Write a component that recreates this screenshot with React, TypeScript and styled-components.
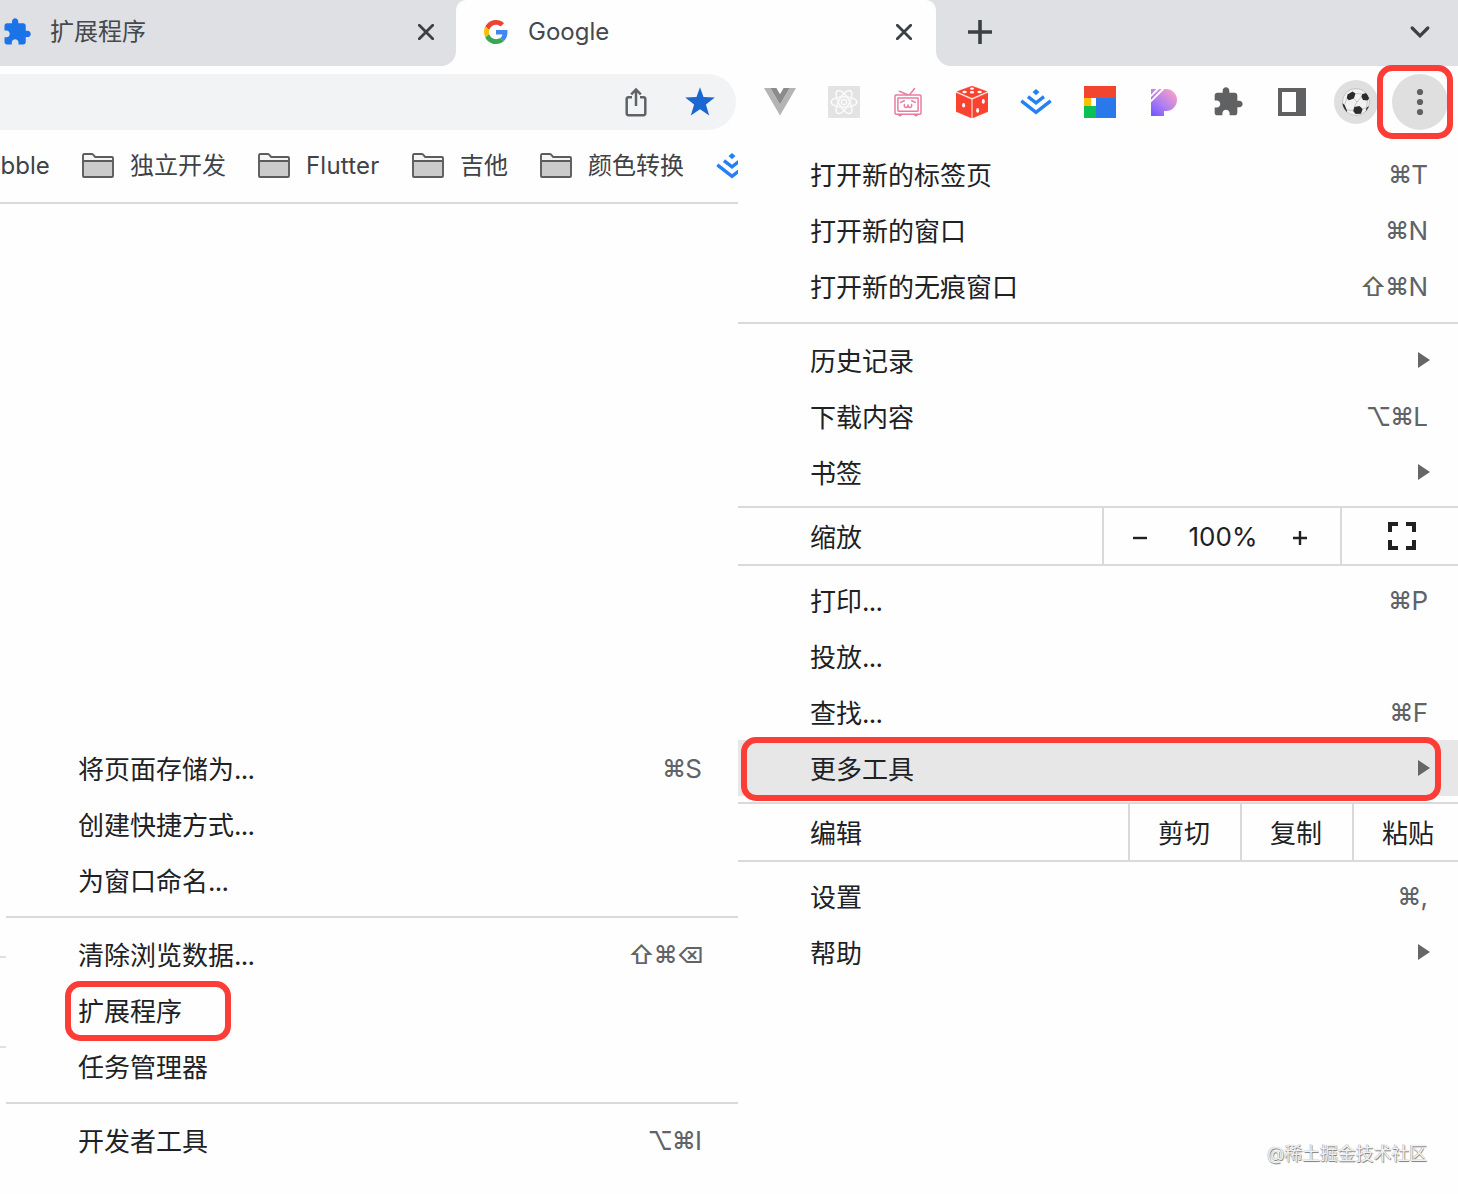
import React from "react";
import styled, { createGlobalStyle } from "styled-components";

const GlobalStyle = createGlobalStyle`
  *, *::before, *::after { box-sizing: border-box; }
  html, body { margin: 0; padding: 0; background: #fff; overflow: hidden; }
  body { font-family: Inter, "Noto Sans CJK SC", sans-serif; color: #202124; }
  svg { display: block; flex: none; }
`;

const Window = styled.div`
  position: relative;
  width: 1458px;
  height: 1194px;
  overflow: hidden;
  background: #fefefe;
`;

/* ---------- Tab strip ---------- */

const TabStrip = styled.header`
  display: flex;
  height: 66px;
  background: #dee0e4;
`;

const Tab = styled.div<{ $active?: boolean; $width: number; $start: number; $end: number }>`
  position: relative;
  display: flex;
  align-items: center;
  width: ${(p) => p.$width}px;
  height: 66px;
  padding: 0 ${(p) => p.$end}px 2px ${(p) => p.$start}px;
  background: ${(p) => (p.$active ? "#fefefe" : "transparent")};
  border-radius: ${(p) => (p.$active ? "10px 10px 0 0" : "0")};

  &::before,
  &::after {
    content: ${(p) => (p.$active ? '""' : "none")};
    position: absolute;
    bottom: 0;
    width: 15px;
    height: 15px;
  }
  &::before {
    left: -15px;
    background: radial-gradient(circle at 0 0, transparent 14.5px, #fefefe 15.5px);
  }
  &::after {
    right: -15px;
    background: radial-gradient(circle at 100% 0, transparent 14.5px, #fefefe 15.5px);
  }
`;

const TabTitle = styled.span<{ $gap: number }>`
  flex: 1;
  margin-left: ${(p) => p.$gap}px;
  font-size: 24px;
  line-height: 32px;
  color: #45484c;
`;

const StripActions = styled.div`
  display: flex;
  flex: 1;
  align-items: center;
  justify-content: space-between;
  padding: 0 28px 2px 32px;
`;

/* ---------- Toolbar ---------- */

const Toolbar = styled.div`
  display: flex;
  align-items: center;
  height: 72px;
`;

const Omnibox = styled.div`
  display: flex;
  align-items: center;
  justify-content: flex-end;
  gap: 32px;
  width: 736px;
  height: 56px;
  padding-right: 20px;
  margin-right: 12px;
  background: #f1f3f4;
  border-radius: 0 28px 28px 0;
`;

const ToolbarButton = styled.div`
  display: flex;
  align-items: center;
  justify-content: center;
  width: 64px;
  height: 64px;
`;

const RoundButton = styled.div<{ $size: number }>`
  display: flex;
  flex: none;
  align-items: center;
  justify-content: center;
  width: ${(p) => p.$size}px;
  height: ${(p) => p.$size}px;
  border-radius: 50%;
  background: #dfdfdf;
`;

/* ---------- Bookmarks ---------- */

const BookmarksBar = styled.nav`
  display: flex;
  align-items: center;
  gap: 32px;
  width: 738px;
  height: 66px;
  padding-bottom: 8px;
  overflow: hidden;
  border-bottom: 2px solid #d9d9d9;
`;

const Bookmark = styled.div<{ $width?: number }>`
  display: flex;
  flex: none;
  align-items: center;
  gap: 16px;
  width: ${(p) => (p.$width ? `${p.$width}px` : "auto")};
  font-size: 24px;
  line-height: 32px;
  color: #3f4246;
  white-space: nowrap;
`;

const BookmarkName = styled.span<{ $indent?: number; $tracking?: number }>`
  margin-left: ${(p) => p.$indent ?? 0}px;
  letter-spacing: ${(p) => p.$tracking ?? 0}px;
`;

const EdgeTick = styled.i<{ $top: number }>`
  position: absolute;
  left: 0;
  top: ${(p) => p.$top}px;
  width: 6px;
  height: 2px;
  background: #e0e0e0;
`;

/* ---------- Menus ---------- */

const Menu = styled.div<{ $left: number; $top: number; $width: number; $end: number }>`
  --end: ${(p) => p.$end}px;
  position: absolute;
  left: ${(p) => p.$left}px;
  top: ${(p) => p.$top}px;
  display: flex;
  flex-direction: column;
  width: ${(p) => p.$width}px;
  background: #fefefe;
  font-size: 26px;
`;

const Item = styled.div<{ $highlighted?: boolean }>`
  display: flex;
  align-items: center;
  justify-content: space-between;
  height: 56px;
  padding: 2px var(--end) 0 72px;
  line-height: 40px;
  background: ${(p) => (p.$highlighted ? "#e7e7e7" : "transparent")};
`;

const Label = styled.span`
  padding-top: 2px;
`;

const Ellipsis = styled.span`
  letter-spacing: -0.8px;
`;

const Shortcut = styled.span`
  display: flex;
  align-items: center;
  color: #606367;
`;

const Modifier = styled.span<{ $pull: number; $size: number }>`
  margin-right: ${(p) => -p.$pull}px;
  font-size: ${(p) => p.$size}px;
  font-weight: 500;
`;

const Arrow = styled.i`
  width: 0;
  height: 0;
  margin: -2px -2px 0 0;
  border-left: 12px solid #666;
  border-top: 8px solid transparent;
  border-bottom: 8px solid transparent;
`;

const Separator = styled.div`
  height: 2px;
  margin: 8px 0;
  background: #d9d9d9;
`;

const SplitRow = styled.div<{ $columns: string }>`
  display: grid;
  grid-template-columns: ${(p) => p.$columns};
  height: 60px;
  margin: 6px 0;
  border-top: 2px solid #d9d9d9;
  border-bottom: 2px solid #d9d9d9;
  overflow: hidden;
`;

const Cell = styled.div<{ $start: number }>`
  display: flex;
  align-items: center;
  padding: 2px 0 0 ${(p) => p.$start}px;
  line-height: 40px;
  white-space: nowrap;

  & + & {
    border-left: 2px solid #d9d9d9;
  }
`;

const ZoomControls = styled.div`
  display: flex;
  align-items: center;

  & > svg { margin-top: 1px; }
  & > svg:first-child { margin-right: 20px; }
  & > svg:last-child { margin-left: 14px; }
`;

const ZoomValue = styled.span`
  width: 112px;
  text-align: center;
`;

const FullscreenSlot = styled.span`
  margin-top: -2px;
`;

/* ---------- Annotations ---------- */

const Marker = styled.div<{ $x: number; $y: number; $w: number; $h: number }>`
  position: absolute;
  left: ${(p) => p.$x}px;
  top: ${(p) => p.$y}px;
  width: ${(p) => p.$w}px;
  height: ${(p) => p.$h}px;
  border: 6px solid #fc3d37;
  border-radius: 15px;
`;

const Watermark = styled.div`
  position: absolute;
  right: 31px;
  bottom: 27px;
  font-size: 18px;
  line-height: 26px;
  color: #f0f0f0;
  letter-spacing: -0.15px;
  text-shadow: 0.7px 0.7px 0.8px #7c7c7c, -0.3px -0.3px 0.8px #a8a8a8;
`;

/* ---------- Icons ---------- */

const Puzzle = ({ size, color }: { size: number; color: string }) => (
  <svg width={size} height={size} viewBox="0 0 24 24" fill={color}>
    <path d="M20.5 11H19V7c0-1.1-.9-2-2-2h-4V3.5C13 2.12 11.88 1 10.5 1S8 2.12 8 3.5V5H4c-1.1 0-1.99.9-1.99 2v3.8H3.5c1.49 0 2.7 1.21 2.7 2.7s-1.21 2.7-2.7 2.7H2V20c0 1.1.9 2 2 2h3.8v-1.5c0-1.49 1.21-2.7 2.7-2.7 1.49 0 2.7 1.21 2.7 2.7V22H17c1.1 0 2-.9 2-2v-4h1.5c1.38 0 2.5-1.12 2.5-2.5S21.88 11 20.5 11z" />
  </svg>
);

const Close = () => (
  <svg width="16" height="16" viewBox="0 0 16 16" stroke="#3c4043" strokeWidth="2.8" strokeLinecap="round">
    <path d="M1.3 1.3l13.4 13.4M14.7 1.3L1.3 14.7" />
  </svg>
);

const Plus = () => (
  <svg width="24" height="24" viewBox="0 0 24 24" stroke="#3c4043" strokeWidth="3.6">
    <path d="M12 0v24M0 12h24" />
  </svg>
);

const Chevron = () => (
  <svg width="20" height="12" viewBox="0 0 20 12" fill="none" stroke="#3c4043" strokeWidth="3.2" strokeLinecap="round">
    <path d="M2.200 2L10 9.8 17.8 2" />
  </svg>
);

const GoogleMark = () => (
  <svg width="24" height="24" viewBox="0 0 48 48">
    <path fill="#EA4335" d="M24 9.5c3.54 0 6.71 1.22 9.21 3.6l6.85-6.85C35.9 2.38 30.47 0 24 0 14.62 0 6.51 5.38 2.56 13.22l7.98 6.19C12.43 13.72 17.74 9.5 24 9.5z" />
    <path fill="#4285F4" d="M46.98 24.55c0-1.57-.15-3.09-.38-4.55H24v9.02h12.94c-.58 2.96-2.26 5.48-4.78 7.18l7.73 6c4.51-4.18 7.09-10.36 7.09-17.65z" />
    <path fill="#FBBC05" d="M10.53 28.59c-.48-1.45-.76-2.99-.76-4.59s.27-3.14.76-4.59l-7.98-6.19C.92 16.46 0 20.12 0 24c0 3.88.92 7.54 2.56 10.78l7.97-6.19z" />
    <path fill="#34A853" d="M24 48c6.48 0 11.93-2.13 15.89-5.81l-7.73-6c-2.15 1.45-4.92 2.3-8.16 2.3-6.26 0-11.57-4.22-13.47-9.91l-7.98 6.19C6.51 42.62 14.62 48 24 48z" />
  </svg>
);

const Share = () => (
  <svg width="32" height="32" viewBox="0 0 32 32" fill="none" stroke="#5f6368" strokeWidth="2.5">
    <path d="M12 11.2H8.6c-1.3 0-1.9.6-1.9 1.9v14.2c0 1.3.6 1.9 1.9 1.9h14.8c1.3 0 1.9-.6 1.9-1.9V13.1c0-1.3-.6-1.9-1.9-1.9H20M16 20V4M11.2 8.3L16 3.6l4.8 4.7" />
  </svg>
);

const Star = () => (
  <svg width="32" height="32" viewBox="0 0 32 32" fill="#1967d2">
    <path d="M16 1.2l3.5 9.9 11.3.4-8.9 7 3.3 10.9L16 23.2l-9.2 6.2 3.3-10.9-8.9-7 11.3-.4z" />
  </svg>
);

const Folder = () => (
  <svg width="32" height="26" viewBox="0 0 32 26">
    <path d="M1 23V2.2C1 1.5 1.4 1 2.2 1h7.6c.6 0 1 .2 1.3.6L13.2 4H30c.6 0 1 .4 1 1v18c0 .6-.4 1-1 1H2c-.6 0-1-.4-1-1z" fill="#f4f4f4" />
    <path d="M1 8h30v16H1z" fill="#cbcbcb" />
    <path d="M1 23V2.2C1 1.5 1.4 1 2.2 1h7.6c.6 0 1 .2 1.3.6L13.2 4H30c.6 0 1 .4 1 1v18c0 .6-.4 1-1 1H2c-.6 0-1-.4-1-1zM1 8h30" fill="none" stroke="#5c5c5c" strokeWidth="1.9" />
  </svg>
);

const VMark = () => (
  <svg width="32" height="32" viewBox="0 0 32 32">
    <path d="M0 2l16 27.5L32 2h-6.4L16 18.5 6.4 2z" fill="#b4b4b4" />
    <path d="M6.4 2L16 18.5 25.6 2h-6L16 8.3 12.4 2z" fill="#8b8b8b" />
  </svg>
);

const Atom = () => (
  <svg width="32" height="32" viewBox="0 0 32 32" fill="none" stroke="#fafafa" strokeWidth="1.5">
    <rect width="32" height="32" rx="1" fill="#e3e3e3" stroke="none" />
    <ellipse cx="16" cy="16" rx="13" ry="5.2" />
    <ellipse cx="16" cy="16" rx="13" ry="5.2" transform="rotate(60 16 16)" />
    <ellipse cx="16" cy="16" rx="13" ry="5.2" transform="rotate(120 16 16)" />
    <circle cx="16" cy="16" r="2.6" />
  </svg>
);

const Television = () => (
  <svg width="32" height="32" viewBox="0 0 32 32" fill="none" stroke="#ea7c9f" strokeWidth="1.5" strokeLinecap="round" strokeLinejoin="round">
    <rect x="3" y="9" width="26" height="19.2" rx="1.2" />
    <rect x="5.9" y="12" width="20.2" height="13.2" rx=".6" />
    <path d="M7.3 5.3l8.4 3.5M22.6 2.5l-5 6.2M6.5 28.4c.3 1.8 2.6 1.8 2.9 0M22.6 28.4c.3 1.8 2.6 1.8 2.9 0M8.7 16.4l3.6-1.6M19.7 14.8l3.6 1.6" />
    <path d="M12.4 18.4c-.4 2 .2 3 1.5 3 1.2 0 2.1-.9 2.1-2.4 0 1.5.9 2.4 2.1 2.4 1.3 0 1.9-1 1.5-3" />
  </svg>
);

const Dice = () => (
  <svg width="32" height="32" viewBox="0 0 32 32">
    <path d="M16 0l15 5.5L16 12 1 5.5zM0 6.800l15.300 6.600V32L0 25.5zM32 6.800l-15.300 6.600V32L32 25.5z" fill="#fb4230" stroke="#fb4230" strokeWidth=".4" strokeLinejoin="round" />
    <g fill="#fff">
      <ellipse cx="16" cy="2.7" rx="2" ry="1.1" />
      <ellipse cx="8.6" cy="6" rx="2.2" ry="1.3" />
      <ellipse cx="16" cy="6.2" rx="2.2" ry="1.3" />
      <ellipse cx="23.6" cy="6" rx="2.2" ry="1.3" />
      <ellipse cx="7.6" cy="19.3" rx="1.5" ry="2.3" />
      <ellipse cx="27.3" cy="15.4" rx="1.5" ry="2.3" />
      <ellipse cx="21.6" cy="24.4" rx="1.5" ry="2.3" />
    </g>
  </svg>
);

const Chevrons = () => (
  <svg width="32" height="32" viewBox="0 0 32 32" fill="none" stroke="#2580f5" strokeWidth="3.4">
    <path d="M16 3l3.5 3.1L16 9.2l-3.5-3.1z" fill="#2580f5" stroke="none" />
    <path d="M8 10.6l8 6.200 8-6.200M1.300 14.800L16 26.300l14.700-11.500" />
  </svg>
);

const Blocks = () => (
  <svg width="32" height="32" viewBox="0 0 32 32">
    <path fill="#f2452f" d="M0 0h32v12H0z" />
    <path fill="#fcbe06" d="M0 12h7.5v8H0z" />
    <path fill="#fff" d="M7.5 12H12v8H7.5z" />
    <path fill="#08c152" d="M0 20h12v12H0z" />
    <path fill="#2979ea" d="M12 12h20v20H12z" />
  </svg>
);

const Petal = () => (
  <svg width="32" height="32" viewBox="0 0 32 32">
    <defs>
      <linearGradient id="petal" x1="5" y1="28" x2="25" y2="6" gradientUnits="userSpaceOnUse">
        <stop offset="0" stopColor="#755cff" />
        <stop offset=".45" stopColor="#b27fee" />
        <stop offset="1" stopColor="#f39ccb" />
      </linearGradient>
    </defs>
    <path d="M3 3h15a11 11 0 0 1 0 22h-2v5H3z" fill="url(#petal)" />
    <path d="M2 10.8L10.8 2M2 16.2L16.2 2" stroke="#fefefe" strokeWidth="1.8" />
  </svg>
);

const SidePanel = () => (
  <svg width="28" height="28" viewBox="0 0 28 28">
    <path fill="#5f6163" fillRule="evenodd" d="M0 0h28v28H0zM4 4v20h14V4z" />
  </svg>
);

const SoccerBall = () => (
  <svg width="28" height="28" viewBox="0 0 28 28">
    <defs>
      <clipPath id="ball"><circle cx="14" cy="14" r="13.5" /></clipPath>
    </defs>
    <circle cx="14" cy="14" r="13.5" fill="#f1f1f1" stroke="#aaa" strokeWidth=".6" />
    <g clipPath="url(#ball)" fill="#2c2c2c">
      <path d="M5.5 6.5l5-3 3 2-1.6 5-5 1.8-2.2-2zM20.3 6l4.2-1 3 5-2 2.5-4.5-.6-1.7-3.3zM12.3 19l5.2-.9 3.2 3-1.7 4.6-5.4.3-2.5-3zM0 15l2.5 1.8L5 22.5l-.5 2.5L0 21zM24.5 19.5l3-1.5-1.5 5.5-2.5 1.5z" />
      <path d="M11.9 10.5l3 3.5 4.4-5M14.9 14l-2.6 5M13.5 5.5l6.8.5M4.8 10.5l-2.3 6.3M5 22l6.5.5M20.7 21.1l3.8-1.6 1-7" fill="none" stroke="#b5b5b5" strokeWidth=".7" />
    </g>
  </svg>
);

const Dots = () => (
  <svg width="8" height="28" viewBox="0 0 8 28" fill="#5f6163">
    <circle cx="4" cy="4" r="3.1" />
    <circle cx="4" cy="14" r="3.1" />
    <circle cx="4" cy="24" r="3.1" />
  </svg>
);

const Minus = () => (
  <svg width="14" height="14" viewBox="0 0 14 14" stroke="#202124" strokeWidth="2.4">
    <path d="M0 7h14" />
  </svg>
);

const SmallPlus = () => (
  <svg width="14" height="14" viewBox="0 0 14 14" stroke="#202124" strokeWidth="2.4">
    <path d="M0 7h14M7 0v14" />
  </svg>
);

const Fullscreen = () => (
  <svg width="28" height="28" viewBox="0 0 28 28" fill="none" stroke="#202124" strokeWidth="4">
    <path d="M10 2H2v8M18 2h8v8M10 26H2v-8M18 26h8v-8" />
  </svg>
);

/* ---------- Menu entries ---------- */

type Entry = { label: string; more?: boolean; keys?: string; submenu?: boolean; highlighted?: boolean };

/* Modifier glyphs carry wide side bearings, so each one is pulled toward its neighbour. */
const glyphs: Record<string, { pull: number; size: number }> = {
  "⌘": { pull: 0.7, size: 24 },
  "⇧": { pull: 1, size: 25 },
  "⌥": { pull: 1.2, size: 25 },
  "⌫": { pull: 1.5, size: 22 },
};

const Keys = ({ keys }: { keys: string }) => (
  <Shortcut>
    {Array.from(keys).map((k) =>
      glyphs[k] ? (
        <Modifier key={k} $pull={glyphs[k].pull} $size={glyphs[k].size}>
          {k}
        </Modifier>
      ) : (
        <span key={k}>{k}</span>
      )
    )}
  </Shortcut>
);

const Entries = ({ items }: { items: Entry[] }) => (
  <>
    {items.map((e) => (
      <Item key={e.label} $highlighted={e.highlighted}>
        <Label>
          {e.label}
          {e.more && <Ellipsis>...</Ellipsis>}
        </Label>
        {e.keys && <Keys keys={e.keys} />}
        {e.submenu && <Arrow />}
      </Item>
    ))}
  </>
);

const extensions = [VMark, Atom, Television, Dice, Chevrons, Blocks, Petal];

export default function App() {
  return (
    <Window>
      <GlobalStyle />
      <TabStrip>
        <Tab $width={456} $start={2} $end={22}>
          <Puzzle size={30} color="#1a73e8" />
          <TabTitle $gap={18}>扩展程序</TabTitle>
          <Close />
        </Tab>
        <Tab $active $width={480} $start={28} $end={24}>
          <GoogleMark />
          <TabTitle $gap={20}>Google</TabTitle>
          <Close />
        </Tab>
        <StripActions>
          <Plus />
          <Chevron />
        </StripActions>
      </TabStrip>

      <Toolbar>
        <Omnibox>
          <Share />
          <Star />
        </Omnibox>
        {extensions.map((Icon, i) => (
          <ToolbarButton key={i}>
            <Icon />
          </ToolbarButton>
        ))}
        <ToolbarButton>
          <Puzzle size={32} color="#5f6163" />
        </ToolbarButton>
        <ToolbarButton>
          <SidePanel />
        </ToolbarButton>
        <ToolbarButton>
          <RoundButton $size={44}>
            <SoccerBall />
          </RoundButton>
        </ToolbarButton>
        <ToolbarButton>
          <RoundButton $size={56}>
            <Dots />
          </RoundButton>
        </ToolbarButton>
      </Toolbar>

      <BookmarksBar>
        <Bookmark $width={50}><BookmarkName $indent={0.5}>bble</BookmarkName></Bookmark>
        <Bookmark $width={144}><Folder /><BookmarkName>独立开发</BookmarkName></Bookmark>
        <Bookmark $width={122}><Folder /><BookmarkName $tracking={0.2}>Flutter</BookmarkName></Bookmark>
        <Bookmark $width={96}><Folder /><BookmarkName>吉他</BookmarkName></Bookmark>
        <Bookmark $width={144}><Folder /><BookmarkName>颜色转换</BookmarkName></Bookmark>
        <Bookmark><Chevrons /></Bookmark>
      </BookmarksBar>

      <EdgeTick $top={956} />
      <EdgeTick $top={1046} />

      <Menu $left={738} $top={146} $width={720} $end={30}>
        <Entries
          items={[
            { label: "打开新的标签页", keys: "⌘T" },
            { label: "打开新的窗口", keys: "⌘N" },
            { label: "打开新的无痕窗口", keys: "⇧⌘N" },
          ]}
        />
        <Separator />
        <Entries
          items={[
            { label: "历史记录", submenu: true },
            { label: "下载内容", keys: "⌥⌘L" },
            { label: "书签", submenu: true },
          ]}
        />
        <SplitRow $columns="364px 238px 1fr">
          <Cell $start={72}><Label>缩放</Label></Cell>
          <Cell $start={29}>
            <ZoomControls>
              <Minus />
              <ZoomValue>100%</ZoomValue>
              <SmallPlus />
            </ZoomControls>
          </Cell>
          <Cell $start={46}>
            <FullscreenSlot><Fullscreen /></FullscreenSlot>
          </Cell>
        </SplitRow>
        <Entries
          items={[
            { label: "打印", more: true, keys: "⌘P" },
            { label: "投放", more: true },
            { label: "查找", more: true, keys: "⌘F" },
            { label: "更多工具", submenu: true, highlighted: true },
          ]}
        />
        <SplitRow $columns="390px 112px 112px 1fr">
          <Cell $start={72}><Label>编辑</Label></Cell>
          <Cell $start={28}><Label>剪切</Label></Cell>
          <Cell $start={28}><Label>复制</Label></Cell>
          <Cell $start={28}><Label>粘贴</Label></Cell>
        </SplitRow>
        <Entries
          items={[
            { label: "设置", keys: "⌘," },
            { label: "帮助", submenu: true },
          ]}
        />
      </Menu>

      <Menu $left={6} $top={740} $width={732} $end={36}>
        <Entries
          items={[
            { label: "将页面存储为", more: true, keys: "⌘S" },
            { label: "创建快捷方式", more: true },
            { label: "为窗口命名", more: true },
          ]}
        />
        <Separator />
        <Entries
          items={[
            { label: "清除浏览数据", more: true, keys: "⇧⌘⌫" },
            { label: "扩展程序" },
            { label: "任务管理器" },
          ]}
        />
        <Separator />
        <Entries items={[{ label: "开发者工具", keys: "⌥⌘I" }]} />
      </Menu>

      <Marker $x={1377} $y={65} $w={76} $h={74} />
      <Marker $x={741} $y={737} $w={700} $h={64} />
      <Marker $x={65} $y={981} $w={166} $h={60} />
      <Watermark>@稀土掘金技术社区</Watermark>
    </Window>
  );
}
